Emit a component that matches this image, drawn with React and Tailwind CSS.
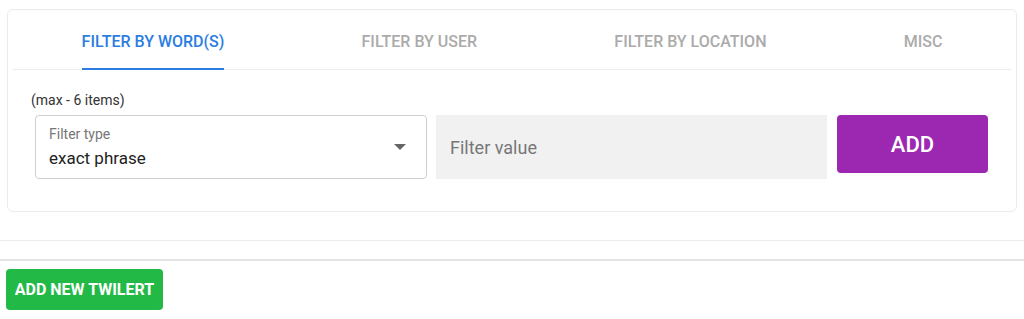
import React, { useState } from 'react'

const tabs = ['Filter by word(s)', 'Filter by user', 'Filter by location', 'Misc']

function Tabs({ active, setActive }) {
  return (
    <div className="flex justify-around border-b border-[#ececec]">
      {tabs.map((t, i) => (
        <button
          key={t}
          onClick={() => setActive(i)}
          className={
            'h-[55px] -mb-px uppercase text-[16px] font-medium border-b-2 ' +
            (i === active ? 'text-[#2b7de0] border-[#2b7de0]' : 'text-[#ababab] border-transparent')
          }
        >
          {t}
        </button>
      ))}
    </div>
  )
}

export default function App() {
  const [active, setActive] = useState(0)

  return (
    <div className="w-[1024px] bg-white font-['Roboto',sans-serif]">
      {/* filter card */}
      <div className="mx-[7px] mt-[9px] w-[1010px] rounded-md border border-[#ebebeb] p-[5px] pb-0">
        <Tabs active={active} setActive={setActive} />

        <div className="px-[18px] pt-[22px] pb-[32px]">
          <p className="text-[14px] leading-4 text-[#333]">(max - 6 items)</p>

          <div className="mt-[7px] ml-[4px] flex items-start">
            <div className="relative h-[64px] w-[392px] rounded border border-[#cfcfcf] px-[13px] pt-[10px]">
              <div className="text-[14px] leading-4 text-[#777]">Filter type</div>
              <div className="mt-[4px] text-[17px] leading-6 text-[#222]">exact phrase</div>
              <svg className="absolute right-[20px] top-[28px]" width="12" height="6" viewBox="0 0 10 5">
                <path d="M0 0 L5 5 L10 0 Z" fill="#666" />
              </svg>
            </div>

            <div className="ml-[9px] flex h-[64px] w-[391px] items-center bg-[#f1f1f1] px-[14px]">
              <span className="text-[18px] text-[#777]">Filter value</span>
            </div>

            <button className="ml-[10px] h-[58px] w-[151px] rounded bg-[#9c27b0] text-[22px] font-medium text-white">
              ADD
            </button>
          </div>
        </div>
      </div>

      {/* separators */}
      <div className="mt-[28px] h-[21px] border-t border-b-2 border-t-[#ececec] border-b-[#e3e3e3]" />

      <div className="px-[6px] pt-[8px]">
        <button className="h-[41px] w-[157px] rounded bg-[#22b946] text-[16px] font-bold text-white">
          ADD NEW TWILERT
        </button>
      </div>
    </div>
  )
}
